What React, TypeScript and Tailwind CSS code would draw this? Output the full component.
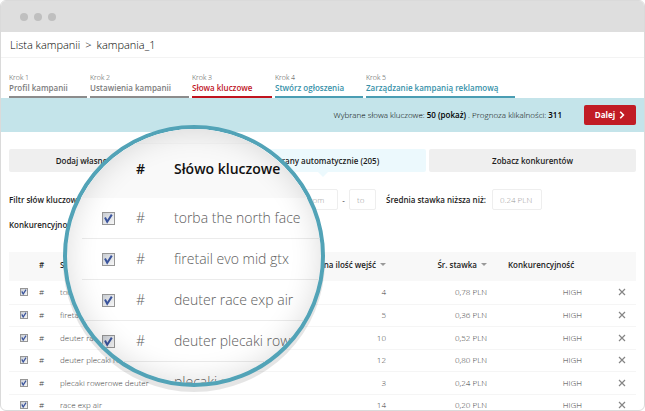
import { useState } from "react";

const steps = [
  { id: 1, label: "Profil kampanii", style: "w-[78px] border-[#8c8c8c] text-[#7c7c7c]" },
  { id: 2, label: "Ustawienia kampanii", style: "w-[99px] border-[#8c8c8c] text-[#7c7c7c]" },
  { id: 3, label: "Słowa kluczowe", style: "w-[80px] border-[#c0141f] text-[#c0141f]" },
  { id: 4, label: "Stwórz ogłoszenia", style: "w-[88px] border-[#4a9db3] text-[#3791a9]" },
  { id: 5, label: "Zarządzanie kampanią reklamową", style: "w-[149px] border-[#4a9db3] text-[#3791a9]" },
];

const keywords = [
  { name: "torba the north face", visits: 4, rate: "0,78 PLN" },
  { name: "firetail evo mid gtx", visits: 5, rate: "0,36 PLN" },
  { name: "deuter race exp air", visits: 10, rate: "0,52 PLN" },
  { name: "deuter plecaki rowerowe", visits: 12, rate: "0,80 PLN" },
  { name: "plecaki rowerowe deuter", visits: 3, rate: "0,24 PLN" },
  { name: "race exp air", visits: 14, rate: "0,20 PLN" },
];

type CheckProps = {
  name: string;
  checked: boolean;
  onChange: () => void;
  size: string;
};

function Check({ name, checked, onChange, size }: CheckProps) {
  return (
    <label className={`grid shrink-0 ${size}`}>
      <input
        type="checkbox"
        aria-label={name}
        checked={checked}
        onChange={onChange}
        className="col-start-1 row-start-1 size-full appearance-none border border-[#969696] bg-linear-to-br from-[#c9cdd3] to-[#f7f7f7]"
      />
      {checked && (
        <svg viewBox="0 0 13 13" className="pointer-events-none col-start-1 row-start-1 size-full">
          <path d="M3 5.5 L5.2 9.8 L9.8 2.6" fill="none" stroke="#3a549c" strokeWidth="2" />
        </svg>
      )}
    </label>
  );
}

function Arrow() {
  return (
    <svg viewBox="0 0 6 3" className="ml-1 inline-block h-[3px] w-[6px] align-middle">
      <path d="M0 0h6L3 3z" fill="#999" />
    </svg>
  );
}

export default function App() {
  const [selected, setSelected] = useState(keywords.map(() => true));

  const toggle = (index: number) => {
    setSelected(selected.map((value, i) => (i === index ? !value : value)));
  };

  return (
    <main className="relative flex h-screen flex-col overflow-hidden rounded-md border border-[#dadada] bg-white font-['Open_Sans',sans-serif] text-[8px] leading-3 text-[#1c1c1c]">
      <div className="flex h-[31px] shrink-0 items-center gap-[6px] bg-[#dedede] pl-[19px]">
        <span className="size-2 rounded-full bg-[#bfbfbf]" />
        <span className="size-2 rounded-full bg-[#bfbfbf]" />
        <span className="size-2 rounded-full bg-[#bfbfbf]" />
      </div>

      <nav className="flex h-[26px] shrink-0 items-center gap-[5px] border-b border-[#f3f3f3] pl-[9px] text-[11px] font-light text-black">
        <a href="#lista">Lista kampanii</a>
        <span>&gt;</span>
        <a href="#kampania">kampania_1</a>
      </nav>

      <ol className="flex shrink-0 gap-[3px] px-2 pt-[14px]">
        {steps.map((step) => (
          <li key={step.id} className={`border-b-2 pb-[3px] whitespace-nowrap ${step.style}`}>
            <p className="text-[7px] leading-[11px] font-light text-[#444]">Krok {step.id}</p>
            <a href={`#krok-${step.id}`} className="block leading-[10px] font-semibold">
              {step.label}
            </a>
          </li>
        ))}
      </ol>

      <div className="flex h-[34px] shrink-0 items-center justify-end gap-[22px] bg-[#c4e4ea] pr-2">
        <p className="font-light text-black">
          Wybrane słowa kluczowe: <b className="font-semibold">50 (pokaż)</b> . Prognoza klikalności:{" "}
          <b className="font-semibold">311</b>
        </p>
        <button
          type="button"
          className="flex h-5 w-[52px] items-center justify-center gap-1 rounded-xs bg-[#c11c25] font-bold text-white"
        >
          Dalej
          <svg viewBox="0 0 6 8" className="h-2 w-[6px]">
            <path d="M1.2 .8 L4.4 4 L1.2 7.2" fill="none" stroke="#fff" strokeWidth="1.6" />
          </svg>
        </button>
      </div>

      <div className="flex shrink-0 flex-col px-2 pt-[17px]">
        <div className="grid grid-cols-3 gap-[3px]">
          <button type="button" className="h-[23px] rounded-xs bg-[#efefef] font-semibold">
            Dodaj własne słowa kluczowe
          </button>
          <button type="button" className="relative h-[23px] rounded-xs bg-[#ecf9fd] font-semibold">
            Dobrany automatycznie (205)
            <svg viewBox="0 0 10 5" className="absolute top-full left-1/2 h-[5px] w-[10px] -translate-x-1/2">
              <path d="M0 0h10L5 5z" fill="#ecf9fd" />
            </svg>
          </button>
          <button type="button" className="h-[23px] rounded-xs bg-[#efefef] font-semibold">
            Zobacz konkurentów
          </button>
        </div>

        <div className="mt-[17px] flex h-[21px] items-center">
          <p className="w-[290px] font-semibold">Filtr słów kluczowych:</p>
          <input
            aria-label="from"
            placeholder="from"
            className="h-full w-[39px] rounded-xs border border-[#eee] px-[7px] font-light placeholder:text-[#999]"
          />
          <span className="w-[11px] text-center">-</span>
          <input
            aria-label="to"
            placeholder="to"
            className="h-full w-[27px] rounded-xs border border-[#eee] px-[7px] font-light placeholder:text-[#999]"
          />
          <label htmlFor="rate" className="mr-[6px] ml-[10px] font-semibold whitespace-nowrap">
            Średnia stawka niższa niż:
          </label>
          <input
            id="rate"
            placeholder="0.24 PLN"
            className="h-full w-[50px] rounded-xs border border-[#eee] px-[7px] font-light placeholder:text-[#999]"
          />
        </div>
        <p className="mt-[9px] font-semibold">Konkurencyjność:</p>

        <table className="mt-[21px] w-full table-fixed font-light text-[#3c3c3c]">
          <thead>
            <tr className="h-[29px] bg-[#f8f8f8] whitespace-nowrap text-[#1c1c1c]">
              <th className="w-[30px]" />
              <th className="w-[21px] pb-1 text-left font-semibold">#</th>
              <th className="pb-1 text-left font-semibold">Słowo kluczowe</th>
              <th className="w-[100px] pb-1 font-semibold">
                <span className="flex items-center justify-end">
                  Miesięczna ilość wejść
                  <Arrow />
                </span>
              </th>
              <th className="w-[101px] pb-1 font-semibold">
                <span className="flex items-center justify-end">
                  Śr. stawka
                  <Arrow />
                </span>
              </th>
              <th className="w-[95px] pb-1 pl-[21px] text-left font-semibold">Konkurencyjność</th>
              <th className="w-[54px]" />
            </tr>
          </thead>
          <tbody>
            {keywords.map((item, index) => (
              <tr key={item.name} className="border-b border-[#f5f5f5] odd:h-[23px] even:h-[22px]">
                <td className="pl-[11px]">
                  <Check
                    name={item.name}
                    checked={selected[index]}
                    onChange={() => toggle(index)}
                    size="size-2"
                  />
                </td>
                <td>#</td>
                <td>{item.name}</td>
                <td className="text-right">{item.visits}</td>
                <td className="text-right">{item.rate}</td>
                <td className="text-right">HIGH</td>
                <td className="pl-9">
                  <button type="button" aria-label={`Usuń ${item.name}`} className="block">
                    <svg viewBox="0 0 8 8" className="size-2">
                      <path d="M1 1l6 6M7 1L1 7" fill="none" stroke="#858585" strokeWidth="1.2" />
                    </svg>
                  </button>
                </td>
              </tr>
            ))}
          </tbody>
        </table>
      </div>

      {/* magnifying lens over the keyword table */}
      <div className="absolute top-[124px] left-[62px] size-[262px] overflow-hidden rounded-full border-4 border-[#52a3b7] bg-white pl-[15px] shadow-[0_5px_0_rgba(0,0,0,0.1)]">
        <div className="-ml-[15px] h-[15px] border-b border-[#f3f3f3] bg-[#f7f7f7]" />
        <div className="-ml-[15px] flex h-[54px] items-center bg-[#f9f9f9] pb-1 pl-[69px] text-sm font-semibold whitespace-nowrap text-[#111]">
          <span className="w-[38px]">#</span>
          <span>Słówo kluczowe</span>
        </div>
        {keywords.slice(0, 5).map((item, index) => (
          <div
            key={item.name}
            className="flex h-[41px] items-center border-b border-[#ebebeb] pl-5 text-sm font-light whitespace-nowrap text-[#5c5c5c]"
          >
            <Check
              name={item.name}
              checked={selected[index]}
              onChange={() => toggle(index)}
              size="size-[13px]"
            />
            <span className="ml-[21px] w-[38px] shrink-0">#</span>
            <span>{item.name}</span>
          </div>
        ))}
        <div className="pointer-events-none absolute inset-0 rounded-full shadow-[inset_0_0_30px_rgba(0,0,0,0.14)]" />
      </div>
    </main>
  );
}
